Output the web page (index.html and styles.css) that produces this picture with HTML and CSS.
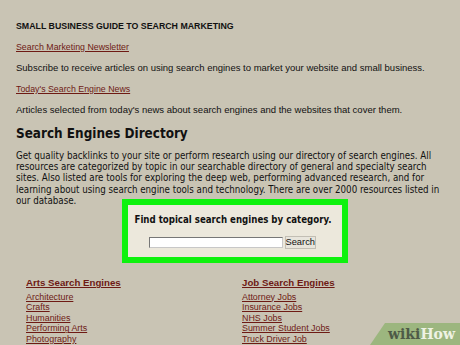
FILE: index.html
```html
<!DOCTYPE html>
<html>
<head>
<meta charset="utf-8">
<link rel="stylesheet" href="styles.css">
</head>
<body>
<div class="page">
  <h1 class="guide">SMALL BUSINESS GUIDE TO SEARCH MARKETING</h1>
  <p class="item"><a class="small-link" href="#">Search Marketing Newsletter</a></p>
  <p class="item">Subscribe to receive articles on using search engines to market your website and small business.</p>
  <p class="item"><a class="small-link" href="#">Today's Search Engine News</a></p>
  <p class="item">Articles selected from today's news about search engines and the websites that cover them.</p>
  <h2 class="dir">Search Engines Directory</h2>
  <p class="intro">Get quality backlinks to your site or perform research using our directory of search engines. All resources are categorized by topic in our searchable directory of general and specialty search sites. Also listed are tools for exploring the deep web, performing advanced research, and for learning about using search engine tools and technology. There are over 2000 resources listed in our database.</p>
  <div class="findwrap">
    <div class="find">
      <div class="find-title">Find topical search engines by category.</div>
      <div class="find-row"><input class="find-input" type="text"><button class="find-btn">Search</button></div>
    </div>
  </div>
  <div class="cats">
    <div class="cat">
      <a class="cat-title" href="#">Arts Search Engines</a>
      <a class="cat-link" href="#">Architecture</a>
      <a class="cat-link" href="#">Crafts</a>
      <a class="cat-link" href="#">Humanities</a>
      <a class="cat-link" href="#">Performing Arts</a>
      <a class="cat-link" href="#">Photography</a>
    </div>
    <div class="cat">
      <a class="cat-title" href="#">Job Search Engines</a>
      <a class="cat-link" href="#">Attorney Jobs</a>
      <a class="cat-link" href="#">Insurance Jobs</a>
      <a class="cat-link" href="#">NHS Jobs</a>
      <a class="cat-link" href="#">Summer Student Jobs</a>
      <a class="cat-link" href="#">Truck Driver Job</a>
    </div>
  </div>
</div>
<div class="wikihow"><span class="wiki">wiki</span><span class="how">How</span></div>
</body>
</html>
```
FILE: styles.css
```css
html, body {
  margin: 0;
  padding: 0;
  background: #c9c4b4;
  overflow: hidden;
}
body {
  width: 460px;
  height: 345px;
  position: relative;
  font-family: "Liberation Sans", Arial, sans-serif;
  color: #111;
}
.page {
  padding: 20px 0 0 16px;
}
.guide {
  font-size: 8.8px;
  font-weight: bold;
  margin: 0 0 9px 0;
  line-height: 12px;
}
.item {
  font-size: 9.5px;
  margin: 0 0 9px 0;
  line-height: 12px;
}
a {
  color: #6e1a14;
  text-decoration: underline;
}
.small-link {
  font-size: 8.8px;
}
.dir {
  font-family: "DejaVu Sans Condensed", "DejaVu Sans", Verdana, sans-serif;
  font-stretch: condensed;
  font-size: 13.4px;
  font-weight: bold;
  margin: 0 0 7px 0;
  line-height: 18px;
}
.intro {
  font-family: "DejaVu Sans Condensed", "DejaVu Sans", Verdana, sans-serif;
  font-stretch: condensed;
  font-size: 9.7px;
  line-height: 11.2px;
  margin: 0;
  width: 432px;
}
.findwrap {
  display: flex;
  padding-left: 106px;
  margin-top: -7px;
}
.find {
  width: 214px;
  height: 52px;
  border: 6px solid #0ef20e;
  background: #ece8dc;
  display: flex;
  flex-direction: column;
  align-items: center;
}
.find-title {
  font-family: "DejaVu Sans Condensed", "DejaVu Sans", Verdana, sans-serif;
  font-stretch: condensed;
  font-size: 9.6px;
  font-weight: bold;
  line-height: 12px;
  margin-top: 9px;
  margin-right: 4px;
}
.find-row {
  display: flex;
  align-items: center;
  margin-top: 10px;
  gap: 2px;
  margin-right: 6px;
}
.find-input {
  width: 134px;
  height: 11px;
  box-sizing: border-box;
  border: 1px solid;
  border-color: #777 #c8c8c8 #c8c8c8 #777;
  background: #fff;
  padding: 0;
  margin: 0;
}
.find-btn {
  font-family: "Liberation Sans", Arial, sans-serif;
  font-size: 9.3px;
  height: 13px;
  width: 31px;
  box-sizing: border-box;
  padding: 0;
  margin: 0;
  border: 1px solid #c2beb4;
  background: #e8e5dc;
  color: #111;
  line-height: 11px;
}
.cats {
  display: flex;
  padding: 13px 0 0 10px;
}
.cat {
  display: flex;
  flex-direction: column;
  width: 216px;
  align-items: flex-start;
}
.cat-title {
  font-size: 9.7px;
  font-weight: bold;
  line-height: 13px;
  height: 13px;
  margin-bottom: 2.5px;
}
.cat-link {
  font-size: 8.9px;
  line-height: 10.6px;
  height: 10.6px;
}
.wikihow {
  position: absolute;
  right: 0;
  bottom: 0;
  width: 90px;
  height: 22px;
  background: #9cb67f;
  clip-path: polygon(15px 0, 100% 0, 100% 100%, 0 100%);
  font-family: "DejaVu Serif", "Liberation Serif", serif;
  font-weight: bold;
  font-size: 14px;
  line-height: 22px;
  text-align: right;
  padding-right: 5px;
  box-sizing: border-box;
}
.wiki { color: #4e5a47; }
.how { color: #eef2e4; }
```
